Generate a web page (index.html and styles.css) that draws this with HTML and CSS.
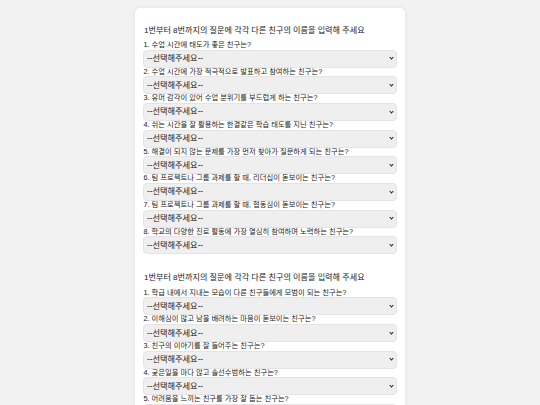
FILE: index.html
```html
<!DOCTYPE html>
<html lang="ko">
<head>
<meta charset="utf-8">
<title>친구 추천 설문</title>
<link rel="stylesheet" href="styles.css">
</head>
<body>
<div class="card">
  <form class="section">
    <p class="title">1번부터 8번까지의 질문에 각각 다른 친구의 이름을 입력해 주세요</p>
    <div class="q"><label>1. 수업 시간에 태도가 좋은 친구는?</label><div class="sel"><select><option>--선택해주세요--</option></select></div></div>
    <div class="q"><label>2. 수업 시간에 가장 적극적으로 발표하고 참여하는 친구는?</label><div class="sel"><select><option>--선택해주세요--</option></select></div></div>
    <div class="q"><label>3. 유머 감각이 있어 수업 분위기를 부드럽게 하는 친구는?</label><div class="sel"><select><option>--선택해주세요--</option></select></div></div>
    <div class="q"><label>4. 쉬는 시간을 잘 활용하는 한결같은 학습 태도를 지닌 친구는?</label><div class="sel"><select><option>--선택해주세요--</option></select></div></div>
    <div class="q"><label>5. 해결이 되지 않는 문제를 가장 먼저 찾아가 질문하게 되는 친구는?</label><div class="sel"><select><option>--선택해주세요--</option></select></div></div>
    <div class="q"><label>6. 팀 프로젝트나 그룹 과제를 할 때, 리더십이 돋보이는 친구는?</label><div class="sel"><select><option>--선택해주세요--</option></select></div></div>
    <div class="q"><label>7. 팀 프로젝트나 그룹 과제를 할 때, 협동심이 돋보이는 친구는?</label><div class="sel"><select><option>--선택해주세요--</option></select></div></div>
    <div class="q"><label>8. 학교의 다양한 진로 활동에 가장 열심히 참여하며 노력하는 친구는?</label><div class="sel"><select><option>--선택해주세요--</option></select></div></div>
  </form>
  <form class="section">
    <p class="title">1번부터 8번까지의 질문에 각각 다른 친구의 이름을 입력해 주세요</p>
    <div class="q"><label>1. 학급 내에서 지내는 모습이 다른 친구들에게 모범이 되는 친구는?</label><div class="sel"><select><option>--선택해주세요--</option></select></div></div>
    <div class="q"><label>2. 이해심이 많고 남을 배려하는 마음이 돋보이는 친구는?</label><div class="sel"><select><option>--선택해주세요--</option></select></div></div>
    <div class="q"><label>3. 친구의 이야기를 잘 들어주는 친구는?</label><div class="sel"><select><option>--선택해주세요--</option></select></div></div>
    <div class="q"><label>4. 궂은일을 마다 않고 솔선수범하는 친구는?</label><div class="sel"><select><option>--선택해주세요--</option></select></div></div>
    <div class="q"><label>5. 어려움을 느끼는 친구를 가장 잘 돕는 친구는?</label><div class="sel"><select><option>--선택해주세요--</option></select></div></div>
    <div class="q"><label>6. 친구들과 갈등 없이 원만하게 지내는 친구는?</label><div class="sel"><select><option>--선택해주세요--</option></select></div></div>
    <div class="q"><label>7. 학급 행사에 가장 적극적으로 참여하는 친구는?</label><div class="sel"><select><option>--선택해주세요--</option></select></div></div>
    <div class="q"><label>8. 항상 밝은 모습으로 주변을 즐겁게 하는 친구는?</label><div class="sel"><select><option>--선택해주세요--</option></select></div></div>
  </form>
</div>
</body>
</html>
```

FILE: styles.css
```css
html, body {
  margin: 0;
  padding: 0;
  background: #f2f2f2;
  overflow: hidden;
}
body {
  font-family: "Liberation Sans", "Noto Sans CJK KR", sans-serif;
  color: #222;
}
.card {
  width: 270px;
  box-sizing: border-box;
  margin: 8px auto 0;
  padding: 0 8px 20px;
  background: #fff;
  border-radius: 5px;
  box-shadow: 0 0 4px rgba(0, 0, 0, 0.08);
}
.section {
  display: flex;
  flex-direction: column;
  padding-top: 16.5px;
  margin: 0 0 1.5px;
}
.title {
  margin: 0 0 5.5px 1px;
  font-size: 8.1px;
  line-height: 11px;
  color: #222;
}
.q {
  display: flex;
  flex-direction: column;
}
.q label {
  font-size: 7.3px;
  line-height: 8.65px;
  padding-left: 0.5px;
  color: #222;
  white-space: nowrap;
}
.sel {
  position: relative;
}
.sel::after {
  content: "";
  position: absolute;
  right: 4px;
  top: 6.6px;
  width: 2px;
  height: 2px;
  border-right: 1.3px solid #222;
  border-bottom: 1.3px solid #222;
  transform: rotate(45deg);
  pointer-events: none;
}
.q select {
  display: block;
  height: 18px;
  width: 100%;
  box-sizing: border-box;
  margin: 0;
  padding: 0 12px 0 3px;
  font-family: "Liberation Sans", "Noto Sans CJK KR", sans-serif;
  font-size: 8.2px;
  color: #222;
  background-color: #efefef;
  border: 1px solid #e4e4e4;
  border-radius: 4px;
  appearance: none;
  -webkit-appearance: none;
}
```
